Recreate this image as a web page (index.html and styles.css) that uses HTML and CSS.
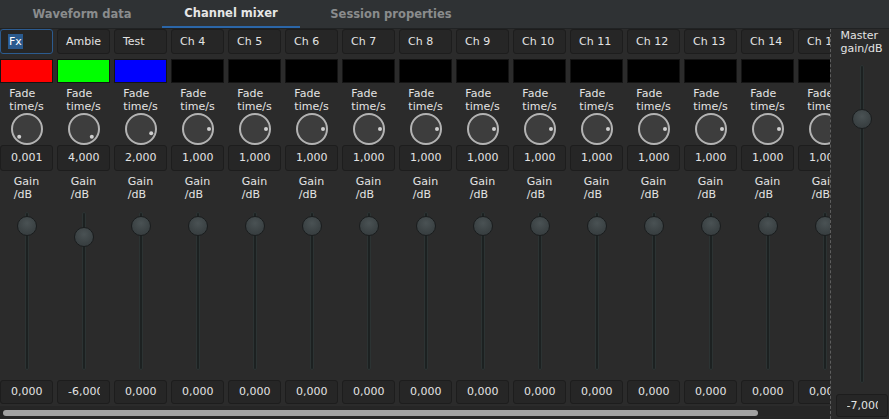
FILE: index.html
```html
<!DOCTYPE html>
<html>
<head>
<meta charset="utf-8">
<link rel="stylesheet" href="styles.css">
</head>
<body>
<div class="app">
  <div class="tabbar">
    <div class="tab t1">Waveform data</div>
    <div class="tab t2 active">Channel mixer</div>
    <div class="tab t3">Session properties</div>
  </div>
  <div class="main">
    <div class="mixer">
      <div class="strips" id="strips"></div>
      <div class="hscroll"><div class="thumb"></div></div>
    </div>
    <div class="master">
      <div class="lbl">Master<br>gain/dB</div>
      <div class="mslider">
        <div class="track"></div>
        <div class="handle" style="top:44px"></div>
      </div>
      <div class="val mval"><span>-7,000</span></div>
    </div>
  </div>
</div>
<script src="app.js"></script>
</body>
</html>
```
FILE: styles.css
```css
html, body {
  margin: 0;
  padding: 0;
  background: #2b2b2b;
}
body {
  font-family: "DejaVu Sans", sans-serif;
  font-size: 11px;
  color: #e3e3e3;
}
.app {
  width: 889px;
  height: 419px;
  overflow: hidden;
  display: flex;
  flex-direction: column;
}
.tabbar {
  height: 28px;
  flex-shrink: 0;
  background: #2f3234;
  display: flex;
  padding-left: 11px;
  gap: 9px;
  box-sizing: border-box;
}
.tab {
  height: 28px;
  line-height: 28px;
  box-sizing: border-box;
  text-align: center;
  font-weight: bold;
  font-size: 11.5px;
  color: #8a8c8d;
  padding-bottom: 2px;
}
.t1 { width: 142px; }
.t2 { width: 138px; }
.t3 { width: 164px; }
.tab.active {
  color: #e6e6e6;
  border-bottom: 2px solid #2b66a8;
  padding-bottom: 0;
  line-height: 26px;
}
.main {
  flex: 1;
  display: flex;
  min-height: 0;
  border-top: 1px solid #202223;
}
.mixer {
  width: 830px;
  flex-shrink: 0;
  display: flex;
  flex-direction: column;
  overflow: hidden;
}
.strips {
  height: 377px;
  box-sizing: border-box;
  display: flex;
  gap: 4px;
  overflow: hidden;
}
.strip {
  width: 53px;
  flex-shrink: 0;
  display: flex;
  flex-direction: column;
  align-items: center;
}
.name {
  width: 100%;
  height: 25px;
  box-sizing: border-box;
  background: #262626;
  border: 1px solid #1d1d1d;
  border-radius: 3px;
  padding-left: 8px;
  line-height: 23px;
  white-space: nowrap;
  overflow: hidden;
}
.name.sel {
  border-color: #2c5b8f;
  padding-left: 7px;
}
.name.sel span {
  background: #2a5a8e;
  color: #ffffff;
  padding: 1px 1px;
}
.color {
  width: 100%;
  height: 24px;
  margin-top: 5px;
  box-sizing: border-box;
  border: 1px solid #141414;
}
.c-red { background: #ff0000; }
.c-green { background: #00ff00; }
.c-blue { background: #0000ff; }
.c-black { background: #000000; }
.lbl {
  line-height: 13px;
  margin-top: 4px;
  text-align: left;
  white-space: nowrap;
}
.knob {
  width: 32px;
  height: 32px;
  display: block;
}
.val {
  width: 100%;
  height: 26px;
  box-sizing: border-box;
  background: #262626;
  border: 1px solid #1d1d1d;
  border-radius: 3px;
  padding: 0 9px 0 10px;
  line-height: 24px;
}
.val span {
  display: block;
  overflow: hidden;
  white-space: nowrap;
}
.val.bottom {
  height: 24px;
  line-height: 22px;
  margin-top: 4px;
}
.slider {
  position: relative;
  width: 100%;
  height: 175px;
  display: flex;
  justify-content: center;
}
.track {
  width: 4px;
  box-sizing: border-box;
  background: #1c2121;
  border: 1px solid #2c3333;
  border-radius: 2px;
}
.slider .track {
  margin-top: 11px;
  height: 158px;
}
.handle {
  position: absolute;
  left: 50%;
  width: 20px;
  height: 20px;
  margin-left: -10px;
  box-sizing: border-box;
  border-radius: 50%;
  border: 1px solid #1a1d1e;
  background: radial-gradient(circle at 50% 35%, #4a5254 0%, #3b4244 60%, #343a3c 100%);
}
.hscroll {
  height: 13px;
  flex-shrink: 0;
  background: #262626;
  box-sizing: border-box;
  padding: 4px 0 0 3px;
}
.thumb {
  width: 755px;
  height: 6px;
  border-radius: 3px;
  background: #a3a3a3;
}
.master {
  width: 62px;
  flex-shrink: 0;
  border-left: 1px dashed #5e5e5e;
  display: flex;
  flex-direction: column;
  align-items: center;
  box-sizing: border-box;
}
.master .lbl {
  margin-top: 0;
}
.mslider {
  position: relative;
  width: 100%;
  height: 318px;
  margin-top: 10px;
  display: flex;
  justify-content: center;
}
.mslider .track {
  height: 318px;
}
.mval {
  width: 52px;
  height: 23px;
  line-height: 21px;
  margin-top: 11px;
}
```
FILE: app.js
```js
var chans = [
  {n: "Fx", c: "c-red", v: "0,001", a: -135, g: "0,000", h: 15, sel: true},
  {n: "Ambie", c: "c-green", v: "4,000", a: 135, g: "-6,000", h: 26},
  {n: "Test", c: "c-blue", v: "2,000", a: 112.5, g: "0,000", h: 15}
];
for (var i = 4; i <= 15; i++) {
  chans.push({n: "Ch " + i, c: "c-black", v: "1,000", a: 90, g: "0,000", h: 15});
}
var html = "";
chans.forEach(function (ch) {
  var r = ch.a * Math.PI / 180;
  var dx = (16 + 11 * Math.sin(r)).toFixed(1);
  var dy = (16 - 11 * Math.cos(r)).toFixed(1);
  html += '<div class="strip">' +
    '<div class="name' + (ch.sel ? ' sel' : '') + '"><span>' + ch.n + '</span></div>' +
    '<div class="color ' + ch.c + '"></div>' +
    '<div class="lbl">Fade<br>time/s</div>' +
    '<svg class="knob" viewBox="0 0 32 32"><circle cx="16" cy="16" r="15" fill="#3d3d3d" stroke="#b3b3b3" stroke-width="2"/>' +
    '<circle cx="' + dx + '" cy="' + dy + '" r="2" fill="#cfcfcf"/></svg>' +
    '<div class="val"><span>' + ch.v + '</span></div>' +
    '<div class="lbl">Gain<br>/dB</div>' +
    '<div class="slider"><div class="track"></div><div class="handle" style="top:' + ch.h + 'px"></div></div>' +
    '<div class="val bottom"><span>' + ch.g + '</span></div>' +
    '</div>';
});
document.getElementById("strips").innerHTML = html;
```
